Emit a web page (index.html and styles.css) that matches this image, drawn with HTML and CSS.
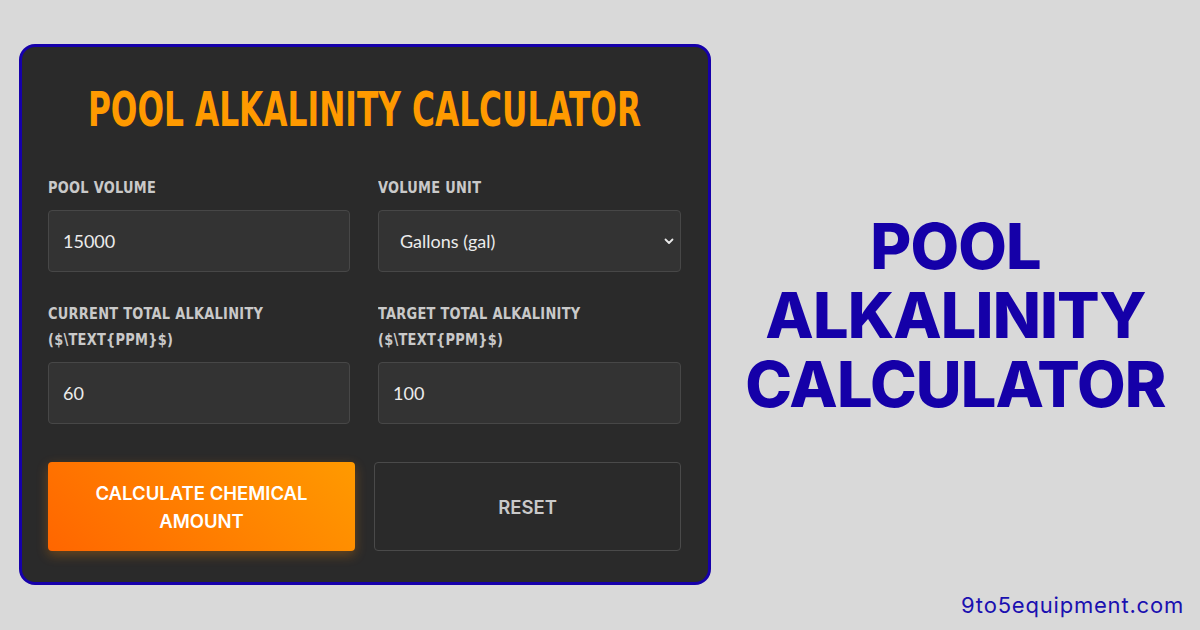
FILE: index.html
```html
<!DOCTYPE html>
<html>
<head>
<meta charset="utf-8">
<link rel="stylesheet" href="styles.css">
</head>
<body>
<div class="page">
  <div class="card">
    <h1 class="card-title"><span class="squeeze">POOL ALKALINITY CALCULATOR</span></h1>
    <div class="grid">
      <div class="field">
        <label class="label">POOL VOLUME</label>
        <div class="input">15000</div>
      </div>
      <div class="field">
        <label class="label">VOLUME UNIT</label>
        <div class="input select">
          <span>Gallons (gal)</span>
          <svg class="chev" width="10" height="7" viewBox="0 0 10 7"><path d="M1.5 1.5 L5 5 L8.5 1.5" fill="none" stroke="#e8e8e8" stroke-width="1.8" stroke-linecap="round" stroke-linejoin="round"/></svg>
        </div>
      </div>
      <div class="field">
        <label class="label">CURRENT TOTAL ALKALINITY<br>($\TEXT{PPM}$)</label>
        <div class="input">60</div>
      </div>
      <div class="field">
        <label class="label">TARGET TOTAL ALKALINITY<br>($\TEXT{PPM}$)</label>
        <div class="input">100</div>
      </div>
    </div>
    <div class="buttons">
      <div class="btn btn-primary">CALCULATE CHEMICAL<br>AMOUNT</div>
      <div class="btn btn-secondary">RESET</div>
    </div>
  </div>
  <div class="side">
    <h2 class="side-title">POOL<br>ALKALINITY<br>CALCULATOR</h2>
    <div class="site">9to5equipment.com</div>
  </div>
</div>
</body>
</html>
```

FILE: styles.css
```css
html, body {
  margin: 0;
  padding: 0;
}
body {
  background: #d9d9d9;
  width: 1200px;
  height: 630px;
  overflow: hidden;
}
.page {
  display: flex;
  height: 630px;
}
.card {
  box-sizing: border-box;
  margin: 44px 0 0 19px;
  width: 692px;
  height: 541px;
  background: #2a2a2a;
  border: 3px solid #1600aa;
  border-radius: 16px;
  padding: 0 27px 0 26px;
}
.card-title {
  margin: 37px 0 0;
  height: 52px;
  display: flex;
  justify-content: center;
  font-family: "DejaVu Sans Condensed", "DejaVu Sans", sans-serif;
  font-weight: bold;
  font-size: 48px;
  line-height: 50px;
  color: #ff9a00;
}
.squeeze {
  display: inline-block;
  transform: scaleX(0.725);
  transform-origin: center;
  white-space: nowrap;
  flex: none;
}
.grid {
  margin-top: 39px;
  display: grid;
  grid-template-columns: 302px 303px;
  column-gap: 28px;
  row-gap: 29px;
}
.field {
  display: flex;
  flex-direction: column;
  justify-content: flex-end;
}
.label {
  font-family: "DejaVu Sans Condensed", "DejaVu Sans", sans-serif;
  font-weight: bold;
  font-size: 16px;
  line-height: 26px;
  color: #c9c9c9;
  letter-spacing: 0.3px;
  margin-bottom: 9px;
  transform: scaleX(0.9);
  transform-origin: left center;
  white-space: nowrap;
}
.input {
  box-sizing: border-box;
  height: 62px;
  background: #333333;
  border: 1px solid #474747;
  border-radius: 4px;
  padding: 0 14px;
  display: flex;
  align-items: center;
  font-family: "Lato", sans-serif;
  font-size: 18px;
  color: #ececec;
}
.select {
  justify-content: space-between;
  padding: 0 6px 0 21px;
}
.buttons {
  margin-top: 38px;
  display: flex;
  gap: 19px;
}
.btn {
  box-sizing: border-box;
  width: 307px;
  height: 89px;
  border-radius: 4px;
  display: flex;
  align-items: center;
  justify-content: center;
  text-align: center;
  font-family: "Inter", sans-serif;
  font-weight: 600;
  font-size: 18.5px;
  line-height: 28px;
}
.btn-primary {
  background: linear-gradient(45deg, #ff6600 0%, #ff9a00 100%);
  color: #ffffff;
  box-shadow: 0 4px 12px rgba(255, 140, 0, 0.3);
}
.btn-secondary {
  background: #2a2a2a;
  border: 1px solid #4a4a4a;
  color: #c9c9c9;
}
.side {
  flex: 1;
  display: flex;
  flex-direction: column;
  align-items: center;
}
.side-title {
  margin: 212px 0 0;
  text-align: center;
  font-family: "Inter", sans-serif;
  font-weight: 800;
  font-size: 63px;
  line-height: 69px;
  letter-spacing: -0.9px;
  color: #1500a8;
}
.site {
  margin-top: auto;
  margin-bottom: 12px;
  align-self: flex-end;
  margin-right: 16px;
  font-family: "Inter", sans-serif;
  font-size: 22px;
  color: #1a10b0;
  letter-spacing: 0.8px;
}
```
